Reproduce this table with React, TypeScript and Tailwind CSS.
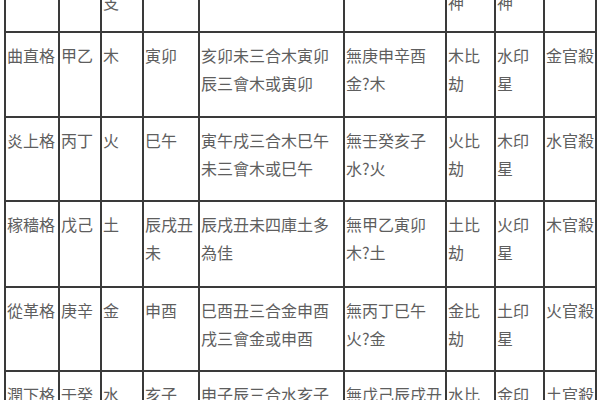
const rows = [
  ["曲直格", "甲乙", "木", ["寅卯"], ["亥卯未三合木寅卯", "辰三會木或寅卯"], ["無庚申辛酉", "金?木"], ["木比", "劫"], ["水印", "星"], "金官殺"],
  ["炎上格", "丙丁", "火", ["巳午"], ["寅午戌三合木巳午", "未三會木或巳午"], ["無壬癸亥子", "水?火"], ["火比", "劫"], ["木印", "星"], "水官殺"],
  ["稼穡格", "戊己", "土", ["辰戌丑", "未"], ["辰戌丑未四庫土多", "為佳"], ["無甲乙寅卯", "木?土"], ["土比", "劫"], ["火印", "星"], "木官殺"],
  ["從革格", "庚辛", "金", ["申酉"], ["巳酉丑三合金申酉", "戌三會金或申酉"], ["無丙丁巳午", "火?金"], ["金比", "劫"], ["土印", "星"], "火官殺"],
  ["潤下格", "壬癸", "水", ["亥子"], ["申子辰三合水亥子"], ["無戊己辰戌丑"], ["水比"], ["金印"], "土官殺"],
];

const header = ["", "", "支", "", "", "", "神", "神", ""];

const Cell = ({ lines, last }: { lines: string | string[]; last: boolean }) => {
  const list = Array.isArray(lines) ? lines : [lines];
  return (
    <div
      className={`border-l-2 border-b-2 border-[#3a3a3a] pl-[1px] pt-2 overflow-hidden ${last ? "border-r-2" : ""}`}
    >
      {list.map((l) => (
        <div key={l} className="whitespace-nowrap leading-[28px]">
          {l}
        </div>
      ))}
    </div>
  );
};

export default function App() {
  return (
    <div
      className="h-[400px] w-[600px] overflow-hidden bg-white pl-[4px] text-[16px] text-[#5e5e5e]"
      style={{ fontFamily: '"Noto Sans CJK TC", "Noto Sans CJK SC", sans-serif' }}
    >
      <div className="grid grid-cols-[54px_42px_42px_56px_145px_102px_49px_49px_54px] grid-rows-[33px_85px_84px_86px_84px_85px]">
        {header.map((h, i) => (
          <div
            key={`h${i}`}
            className={`flex items-end border-l-2 border-b-2 border-[#3a3a3a] pb-[15px] pl-[1px] overflow-hidden ${i === 8 ? "border-r-2" : ""}`}
          >
            <div className="leading-[28px] -mt-[20px]">{h}</div>
          </div>
        ))}
        {rows.map((r, ri) =>
          r.map((c, ci) => <Cell key={`${ri}-${ci}`} lines={c} last={ci === 8} />)
        )}
      </div>
    </div>
  );
}
